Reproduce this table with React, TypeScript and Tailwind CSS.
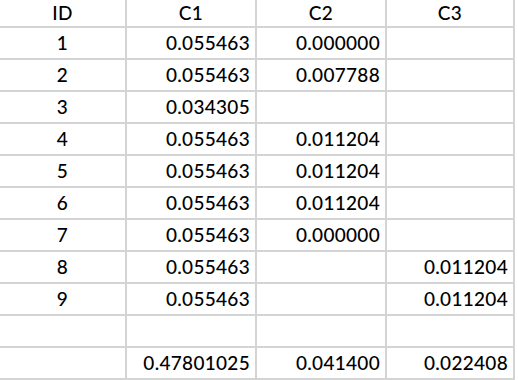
import React from "react";

const rows: [string, string, string, string][] = [
  ["1", "0.055463", "0.000000", ""],
  ["2", "0.055463", "0.007788", ""],
  ["3", "0.034305", "", ""],
  ["4", "0.055463", "0.011204", ""],
  ["5", "0.055463", "0.011204", ""],
  ["6", "0.055463", "0.011204", ""],
  ["7", "0.055463", "0.000000", ""],
  ["8", "0.055463", "", "0.011204"],
  ["9", "0.055463", "", "0.011204"],
  ["", "", "", ""],
  ["", "0.47801025", "0.041400", "0.022408"],
];

export default function App() {
  return (
    <div
      className="w-[518px] h-[380px] bg-white text-black overflow-hidden"
      style={{ fontFamily: "Lato, 'Open Sans', sans-serif" }}
    >
      <div className="grid grid-cols-[127px_130px_130px_128px] grid-rows-[28px_repeat(11,32px)] text-[19px] tracking-[0.3px] font-medium">
        {["ID", "C1", "C2", "C3"].map((h) => (
          <div
            key={h}
            className="flex items-center justify-center border-b-2 border-r-2 border-[#d4d4d4]"
          >
            {h}
          </div>
        ))}
        {rows.map((r, ri) =>
          r.map((c, ci) => (
            <div
              key={`${ri}-${ci}`}
              className={`flex items-center border-b-2 border-r-2 border-[#d4d4d4] ${
                ci === 0 ? "justify-center" : "justify-end pr-[5px]"
              }`}
            >
              {c}
            </div>
          ))
        )}
      </div>
    </div>
  );
}
